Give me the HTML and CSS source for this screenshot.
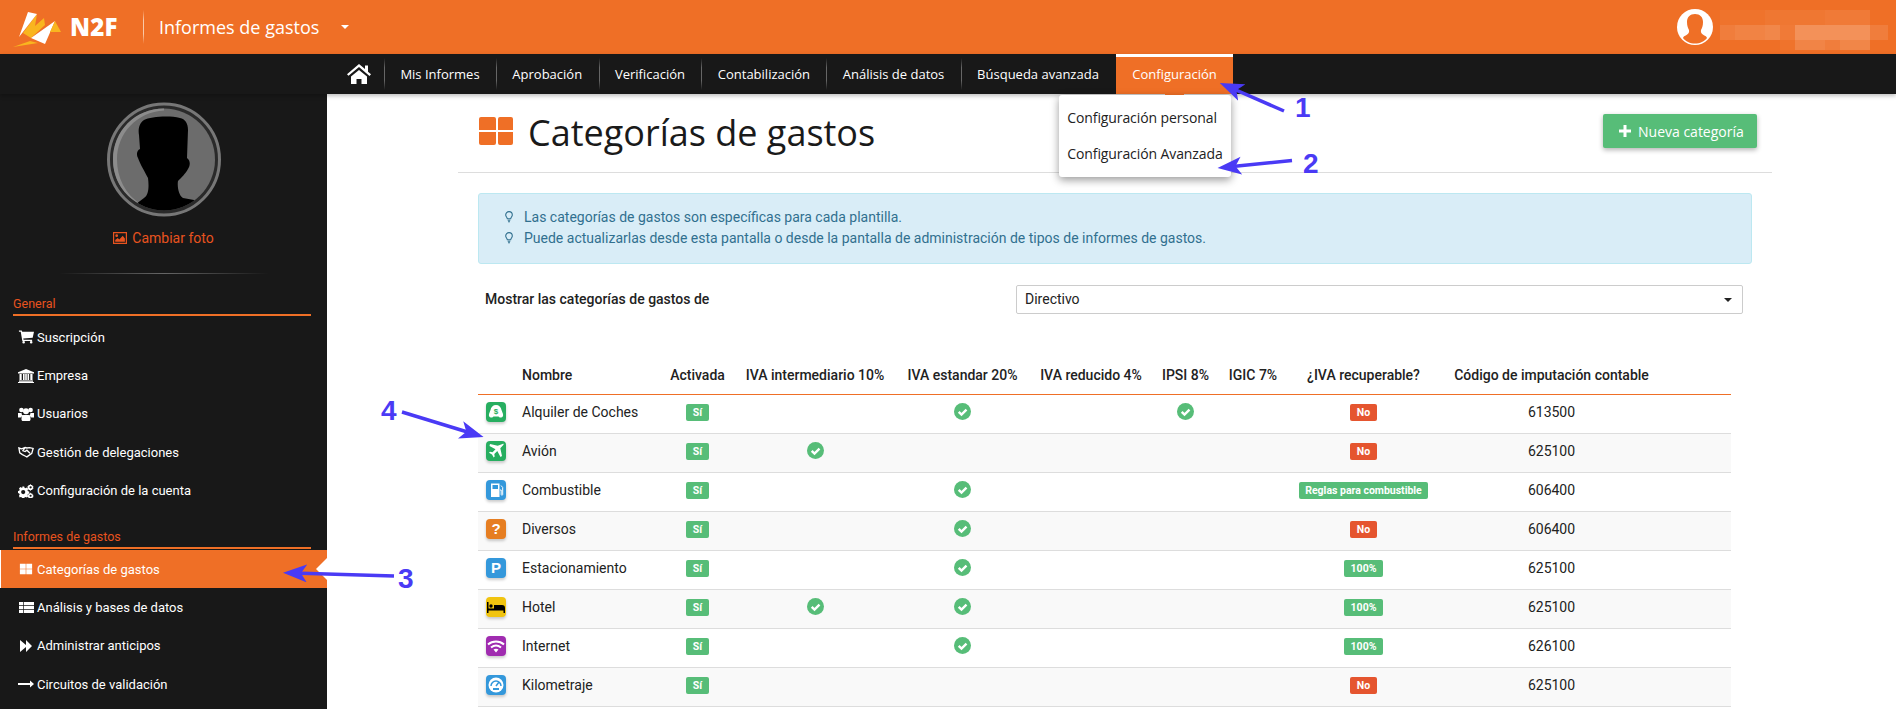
FILE: index.html
```html
<!DOCTYPE html>
<html lang="es">
<head>
<meta charset="utf-8">
<title>Categorías de gastos</title>
<link rel="stylesheet" href="styles.css">
</head>
<body>
<svg class="sprite" width="0" height="0">
  <symbol id="i-cart" viewBox="-1 0 17 14"><path d="M0 0h3l.5 1.500H16l-1.400 6.200-10 1 .3 1.300H14v1.300H3.600L1.900 1.300H0zM5 11.200a1.400 1.400 0 1 1 0 2.800 1.400 1.400 0 0 1 0-2.800zm8 0a1.400 1.400 0 1 1 0 2.800 1.400 1.400 0 0 1 0-2.800z"/></symbol>
  <symbol id="i-bank" viewBox="0 0 16 14"><path d="M8 0l8 3.200V4.400H0V3.200zM1.500 5h2.200v6H1.500zM5 5h1.600v6H5zm2.200 0h1.600v6H7.200zM9.500 5h1.600v6H9.500zm2.800 0h2.200v6h-2.200zM1 11.600h14V12.700H1zM0 13h16v1H0z"/></symbol>
  <symbol id="i-users" viewBox="0 0 16 14"><circle cx="3.400" cy="3" r="2.300"/><circle cx="12.600" cy="3" r="2.300"/><circle cx="8" cy="4.200" r="3"/><path d="M0 6h3.500a4 4 0 0 0 1.200 2.800C3.500 9.300 3 10 2.800 10.500H0zM16 6h-3.500a4 4 0 0 1-1.200 2.800c1.200.5 1.700 1.200 1.900 1.700H16zM5.500 8h5c1.500 0 2 1.500 2 3v1.500c0 .8-.6 1.500-1.500 1.500H5c-.9 0-1.500-.7-1.500-1.500V11c0-1.500.5-3 2-3z"/></symbol>
  <symbol id="i-hands" viewBox="0 0 18 12"><path fill="none" stroke="#fff" stroke-width="1.500" d="M1 1.500l3 1 4-1.500 2 .5 3-.5 4 1-1.500 5.500-5.500 4-2-1-3-1.500-3-2zM8 1L5.500 4.500 8 5.500l2-1.500 3.500 3.500"/></symbol>
  <symbol id="i-cogs" viewBox="0 0 16 14"><path fill-rule="evenodd" d="M4.200 2.500h2l.3 1.300 1.100.5 1.200-.7 1.400 1.400-.7 1.200.5 1.100 1.300.3v2l-1.300.3-.5 1.100.7 1.200-1.400 1.400-1.200-.7-1.100.5-.3.600h-2l-.3-.6-1.100-.5-1.200.7L1 11.700l.7-1.200-.5-1.100L0 9.100v-2l1.200-.3.500-1.100L1 4.500l1.400-1.400 1.200.7 1.100-.5zM5.200 6a2.100 2.100 0 1 0 0 4.200 2.100 2.100 0 0 0 0-4.200z"/><path fill-rule="evenodd" d="M12.500 0l.6 1 1.100-.1.300 1.100 1 .5-.4 1 .4 1-1 .5-.3 1.100-1.100-.1-.6.9-.8-.8-1.100.1-.3-1.100-1-.5.400-1-.4-1 1-.5.300-1.100 1.100.1zm.1 2.200a1.100 1.100 0 1 0 0 2.300 1.100 1.100 0 0 0 0-2.300zM12.500 8.500l.6 1h1.100l.3 1 1 .6-.4 1 .4.900-1 .5-.3 1h-3.400l-.3-1-1-.5.400-.9-.4-1 1-.6.300-1h1.100zm.1 2.200a1 1 0 1 0 0 2.100 1 1 0 0 0 0-2.100z"/></symbol>
  <symbol id="i-grid" viewBox="-2 -1.500 17 14"><path d="M0 0h6.200v5.200H0zM6.800 0H13v5.200H6.800zM0 5.800h6.200V11H0zM6.800 5.800H13V11H6.800z"/></symbol>
  <symbol id="i-list" viewBox="-1 -1 16 14"><path d="M0 0h4v3.200H0zM4.700 0H15v3.200H4.700zM0 3.900h4v3.200H0zM4.700 3.900H15v3.200H4.700zM0 7.800h4V11H0zM4.700 7.800H15V11H4.700z"/></symbol>
  <symbol id="i-ff" viewBox="-2 -1 16 14"><path d="M0 0l6 5V0l6 6-6 6V7l-6 5z"/></symbol>
  <symbol id="i-long" viewBox="0 0 14 6"><path d="M0 2.200h10.500V0L14 3l-3.500 3V3.800H0z"/></symbol>
  <symbol id="i-bulb" viewBox="0 0 8 12"><path fill="none" stroke="#31708f" stroke-width="1.100" d="M4 .6a3.300 3.300 0 0 1 3.300 3.300c0 1.500-1.300 2.300-1.600 3.800H2.300C2 6.200.7 5.400.7 3.900A3.300 3.300 0 0 1 4 .6zM2.700 9.200h2.600M3 10.800h2"/></symbol>
  <symbol id="i-check" viewBox="0 0 17 17"><circle cx="8.500" cy="8.500" r="8.500" fill="#57bd78"/><path d="M4.700 8.800l2.800 2.800 5-5" fill="none" stroke="#fff" stroke-width="2.400"/></symbol>
</svg>

<header class="topbar">
  <svg class="logo" viewBox="0 0 68 44" width="68" height="44">
    <path fill="#f9b51f" d="M13 42l25-4-8-2z"/>
    <path fill="#f9b51f" d="M37 9l-2 12 9-8 1 7-14 13-8-5z"/>
    <path fill="#fff" d="M28 7l9 2-18 23z"/>
    <path fill="#fff" d="M55 16L45 39 31 33z"/>
    <path fill="#f9b51f" d="M55 16l6 11H50z"/>
  </svg>
  <span class="brand">N2<span class="brand-f">F</span></span>
  <span class="topbar-sep"></span>
  <span class="app-title">Informes de gastos</span>
  <span class="caret"></span>
  <div class="user">
    <svg class="user-pic" viewBox="0 0 36 36" width="36" height="36">
      <circle cx="18" cy="18" r="18" fill="#fff"/>
      <path fill="#ef6f26" d="M18 5c5 0 8 3 8 8 0 4-1 6-2 8-.5 2 .5 4 2.500 5 2 1 3 1.500 3.500 3-2.500 3.500-7 5.500-12 5.500S8.500 32.500 6 29c.5-1.500 1.500-2 3.500-3s3-3 2.500-5c-1-2-2-4-2-8 0-5 3-8 8-8z"/>
    </svg>
    <svg class="mosaic" viewBox="0 0 168 40" width="168" height="40">
      <g fill="#fff">
        <rect x="0" y="0" width="45" height="15" opacity=".03"/><rect x="45" y="0" width="60" height="15" opacity=".06"/><rect x="105" y="0" width="45" height="15" opacity=".08"/>
        <rect x="0" y="15" width="15" height="15" opacity=".1"/><rect x="15" y="15" width="30" height="15" opacity=".14"/><rect x="45" y="15" width="15" height="15" opacity=".17"/><rect x="60" y="15" width="15" height="15" opacity=".08"/><rect x="75" y="15" width="75" height="15" opacity=".24"/><rect x="150" y="15" width="18" height="15" opacity=".1"/>
        <rect x="60" y="30" width="15" height="10" opacity=".03"/><rect x="75" y="30" width="30" height="10" opacity=".15"/><rect x="105" y="30" width="15" height="10" opacity=".1"/><rect x="120" y="30" width="30" height="10" opacity=".16"/>
      </g>
    </svg>
  </div>
</header>

<nav class="navbar">
  <a class="nav-home"><svg viewBox="0 0 24 20" width="24" height="20"><path fill="#fff" d="M12 0l6 5V1.500h3v6.200l3 2.500-1.500 1.800L12 3 1.500 11.800 0 10.200zM4 12.500L12 6l8 6.500V20h-5.500v-5h-5v5H4z"/></svg></a>
  <a class="nav-item">Mis Informes</a>
  <a class="nav-item">Aprobación</a>
  <a class="nav-item">Verificación</a>
  <a class="nav-item">Contabilización</a>
  <a class="nav-item">Análisis de datos</a>
  <a class="nav-item">Búsqueda avanzada</a>
  <div class="nav-active">
    <a class="nav-active-link">Configuración</a>
    <div class="dropdown">
      <a class="dropdown-item">Configuración personal</a>
      <a class="dropdown-item">Configuración Avanzada</a>
    </div>
  </div>
</nav>

<div class="layout">
  <aside class="sidebar">
    <div class="profile">
      <svg class="profile-pic" viewBox="0 0 114 115" width="114" height="115">
        <defs><clipPath id="pc"><circle cx="57" cy="57.500" r="51"/></clipPath></defs>
        <circle cx="57" cy="57.500" r="55.500" fill="#2a2a2a" stroke="#777" stroke-width="3"/>
        <circle cx="57" cy="57.500" r="51" fill="#6c6c6c"/>
        <path fill="#8c8c8c" d="M57 6.500C28 6.500 6 29 6 57.500c0 20 11 37 28 45C18 92 10 76 10 57.500 10 31 30 10 57 8.500z"/>
        <path clip-path="url(#pc)" fill="#000" d="M37 18c6-3 24-5 36-2 5 1 8 5 8 12l-1 28c4 3 3 8 1 11-2 4-7 9-10 12-1 6 1 15 5 17l11 2 6 30H15l14-26 8-6c5-3 5-12 4-20-3-6-8-14-10-20-2-3-1-8 2-9l-1-14c-1-5 0-12 5-15z"/>
      </svg>
      <a class="photo-link"><svg viewBox="0 0 14 12" width="14" height="12"><path fill-rule="evenodd" fill="#e8531f" d="M0 0h14v12H0zm1.200 1.200v9.600h11.600V1.200zM3.700 2.300a1.400 1.400 0 1 1 0 2.800 1.400 1.400 0 0 1 0-2.800zM2.200 9.800V8l2.500-2 1.600 1.400 3.400-3.600 2.200 2.600v3.400z"/></svg>Cambiar foto</a>
      <div class="fade-rule"></div>
    </div>
    <div class="side-title">General</div>
    <a class="side-item"><svg class="side-icon"><use href="#i-cart"/></svg>Suscripción</a>
    <a class="side-item"><svg class="side-icon"><use href="#i-bank"/></svg>Empresa</a>
    <a class="side-item"><svg class="side-icon"><use href="#i-users"/></svg>Usuarios</a>
    <a class="side-item"><svg class="side-icon"><use href="#i-hands"/></svg>Gestión de delegaciones</a>
    <a class="side-item"><svg class="side-icon"><use href="#i-cogs"/></svg>Configuración de la cuenta</a>
    <div class="side-title side-title-second">Informes de gastos</div>
    <a class="side-item side-item-active"><svg class="side-icon"><use href="#i-grid"/></svg>Categorías de gastos</a>
    <a class="side-item"><svg class="side-icon"><use href="#i-list"/></svg>Análisis y bases de datos</a>
    <a class="side-item"><svg class="side-icon"><use href="#i-ff"/></svg>Administrar anticipos</a>
    <a class="side-item"><svg class="side-icon"><use href="#i-long"/></svg>Circuitos de validación</a>
  </aside>

  <main class="content">
    <div class="page-head">
      <svg class="page-icon" viewBox="0 0 34 28" width="34" height="28"><path fill="#ef6f26" d="M2 0h13a2 2 0 0 1 2 2v11H0V2a2 2 0 0 1 2-2zM21 0h11a2 2 0 0 1 2 2v11H19V2a2 2 0 0 1 2-2zM0 15h17v11a2 2 0 0 1-2 2H2a2 2 0 0 1-2-2zM19 15h15v11a2 2 0 0 1-2 2H21a2 2 0 0 1-2-2z"/></svg>
      <h1 class="page-title">Categorías de gastos</h1>
      <a class="btn-new"><svg viewBox="0 0 12 12" width="12" height="12"><path fill="#fff" d="M4.500 0h3v4.500H12v3H7.500V12h-3V7.500H0v-3h4.500z"/></svg>Nueva categoría</a>
    </div>

    <div class="alert">
      <div class="alert-line"><svg class="bulb"><use href="#i-bulb"/></svg>Las categorías de gastos son específicas para cada plantilla.</div>
      <div class="alert-line"><svg class="bulb"><use href="#i-bulb"/></svg>Puede actualizarlas desde esta pantalla o desde la pantalla de administración de tipos de informes de gastos.</div>
    </div>

    <div class="filter">
      <label class="filter-label">Mostrar las categorías de gastos de</label>
      <div class="select">Directivo<span class="select-caret"></span></div>
    </div>

    <table class="grid">
      <colgroup>
        <col class="c-icon"><col class="c-name"><col class="c-on"><col class="c-i10"><col class="c-i20"><col class="c-i4"><col class="c-ipsi"><col class="c-igic"><col class="c-rec"><col class="c-code"><col class="c-rest">
      </colgroup>
      <thead>
        <tr><th></th><th class="left">Nombre</th><th>Activada</th><th>IVA intermediario 10%</th><th>IVA estandar 20%</th><th>IVA reducido 4%</th><th>IPSI 8%</th><th>IGIC 7%</th><th>¿IVA recuperable?</th><th>Código de imputación contable</th><th></th></tr>
      </thead>
      <tbody>
        <tr>
          <td><span class="cat cat-green"><svg viewBox="0 0 20 20" width="20" height="20"><path fill="#fff" d="M10 3c3 0 5 2 5.500 5l1.500 4c.5 2-.5 3.500-2 3.500h-1c-1 0-1.300-1-1.300-1H7.300s-.3 1-1.300 1H5c-1.500 0-2.500-1.500-2-3.500L4.500 8C5 5 7 3 10 3z"/><text x="10" y="11.500" class="cat-dollar">$</text></svg></span></td>
          <td class="left">Alquiler de Coches</td><td><span class="badge ok">Sí</span></td><td></td><td><svg class="check"><use href="#i-check"/></svg></td><td></td><td><svg class="check"><use href="#i-check"/></svg></td><td></td><td><span class="badge no">No</span></td><td>613500</td><td></td>
        </tr>
        <tr>
          <td><span class="cat cat-green"><svg viewBox="0 0 20 20" width="20" height="20"><path fill="#fff" d="M16.500 3c1-.7 1.500 0 .8 1l-3 3.300L16 15l-1.500 1-3.200-6-3 3 .4 2.500-1 1-1.700-3-3-1.700 1-1 2.500.4 3-3-6-3.200L4 3l7.700 1.700z"/></svg></span></td>
          <td class="left">Avión</td><td><span class="badge ok">Sí</span></td><td><svg class="check"><use href="#i-check"/></svg></td><td></td><td></td><td></td><td></td><td><span class="badge no">No</span></td><td>625100</td><td></td>
        </tr>
        <tr>
          <td><span class="cat cat-blue"><svg viewBox="0 0 20 20" width="20" height="20"><path fill="#fff" fill-rule="evenodd" d="M5 3.500h8.500V17H5zM6.500 5v4H12V5z"/><path fill="none" stroke="#fff" stroke-width="1" d="M14 10h1.200v4.500c0 1 1.500 1 1.500 0V7.500L15 5.500"/></svg></span></td>
          <td class="left">Combustible</td><td><span class="badge ok">Sí</span></td><td></td><td><svg class="check"><use href="#i-check"/></svg></td><td></td><td></td><td></td><td><span class="badge ok">Reglas para combustible</span></td><td>606400</td><td></td>
        </tr>
        <tr>
          <td><span class="cat cat-orange"><span class="cat-letter">?</span></span></td>
          <td class="left">Diversos</td><td><span class="badge ok">Sí</span></td><td></td><td><svg class="check"><use href="#i-check"/></svg></td><td></td><td></td><td></td><td><span class="badge no">No</span></td><td>606400</td><td></td>
        </tr>
        <tr>
          <td><span class="cat cat-blue"><span class="cat-letter">P</span></span></td>
          <td class="left">Estacionamiento</td><td><span class="badge ok">Sí</span></td><td></td><td><svg class="check"><use href="#i-check"/></svg></td><td></td><td></td><td></td><td><span class="badge ok">100%</span></td><td>625100</td><td></td>
        </tr>
        <tr>
          <td><span class="cat cat-yellow"><svg viewBox="0 0 20 20" width="20" height="20"><path fill="#000" d="M1 5h1.500v6.500H8V8h8a3 3 0 0 1 3 3v5h-1.500v-2.500h-15V16H1z"/><circle cx="5" cy="9" r="1.700" fill="#000"/></svg></span></td>
          <td class="left">Hotel</td><td><span class="badge ok">Sí</span></td><td><svg class="check"><use href="#i-check"/></svg></td><td><svg class="check"><use href="#i-check"/></svg></td><td></td><td></td><td></td><td><span class="badge ok">100%</span></td><td>625100</td><td></td>
        </tr>
        <tr>
          <td><span class="cat cat-purple"><svg viewBox="0 0 20 20" width="20" height="20"><path fill="none" stroke="#fff" stroke-width="2" d="M2 8.500c4.500-4 11.500-4 16 0M5 11.500c3-2.500 7-2.500 10 0"/><path fill="#fff" d="M7.500 13.500c1.500-1 3.500-1 5 0L10 16.500z"/></svg></span></td>
          <td class="left">Internet</td><td><span class="badge ok">Sí</span></td><td></td><td><svg class="check"><use href="#i-check"/></svg></td><td></td><td></td><td></td><td><span class="badge ok">100%</span></td><td>626100</td><td></td>
        </tr>
        <tr>
          <td><span class="cat cat-blue"><svg viewBox="0 0 20 20" width="20" height="20"><circle cx="10" cy="10" r="7.500" fill="#fff"/><path fill="none" stroke="#3498db" stroke-width="1.500" d="M5 11a5 5 0 0 1 10 0M10 11l3-4"/><path fill="#3498db" d="M7 13h6v2H7z"/></svg></span></td>
          <td class="left">Kilometraje</td><td><span class="badge ok">Sí</span></td><td></td><td></td><td></td><td></td><td></td><td><span class="badge no">No</span></td><td>625100</td><td></td>
        </tr>
      </tbody>
    </table>
  </main>
</div>

<svg class="notes" viewBox="0 0 1896 709" width="1896" height="709">
  <defs>
    <marker id="head" markerUnits="userSpaceOnUse" markerWidth="26" markerHeight="20" refX="14" refY="9" orient="auto"><path d="M0 0L24 9 0 18 6 9z" fill="#4a3af5"/></marker>
  </defs>
  <g class="note-lines">
    <line x1="1284" y1="111" x2="1229" y2="87" marker-end="url(#head)"/>
    <line x1="1292" y1="160.600" x2="1227.500" y2="167" marker-end="url(#head)"/>
    <line x1="394" y1="576" x2="293" y2="573" marker-end="url(#head)"/>
    <line x1="402" y1="412" x2="474" y2="434" marker-end="url(#head)"/>
  </g>
  <text class="note-num" x="1295" y="117">1</text>
  <text class="note-num" x="1303" y="173">2</text>
  <text class="note-num" x="398" y="588">3</text>
  <text class="note-num" x="381" y="420">4</text>
</svg>
</body>
</html>
```
FILE: styles.css
```css
* { box-sizing: border-box; }
html, body { margin: 0; height: 709px; overflow: hidden; background: #fff; }
body { position: relative; font-family: "Roboto", "Liberation Sans", sans-serif; font-size: 14px; color: #222; }
.sprite { position: absolute; }

.topbar { height: 54px; background: #ef6f26; display: flex; align-items: center; color: #fff; font-family: "Open Sans", sans-serif; }
.logo { flex: none; margin-left: 0; }
.brand { margin-left: 2px; width: 52px; font-weight: 800; font-size: 24px; letter-spacing: .2px; line-height: 1; }
.brand-f { color: #fff; }
.topbar-sep { width: 1px; height: 34px; margin-left: 21px; background: linear-gradient(transparent, #f9c9a8 30%, #f9c9a8 70%, transparent); }
.app-title { margin-left: 15px; font-size: 18px; line-height: 1; width: 160px; white-space: nowrap; }
.caret { margin-left: 22px; width: 0; height: 0; border: 4px solid transparent; border-top-color: #fff; border-bottom: 0; }
.user { margin-left: auto; margin-right: 8px; display: flex; align-items: flex-start; height: 54px; padding-top: 9px; }
.user-pic { flex: none; }
.mosaic { flex: none; margin-left: 7px; margin-top: 1px; }

.navbar { height: 40px; background: #181818; display: flex; align-items: stretch; padding-left: 347px; color: #fff; font-family: "Open Sans", sans-serif; font-size: 13px; position: relative; z-index: 5; box-shadow: 0 2px 4px rgba(0,0,0,.25); }
.nav-home { width: 37px; display: flex; align-items: center; }
.nav-item { display: flex; align-items: center; padding: 0 16.400px; white-space: nowrap; position: relative; }
.nav-item::before { content: ""; position: absolute; left: 0; top: 4px; bottom: 4px; width: 1px; background: linear-gradient(transparent, #666 30%, #666 70%, transparent); }
.nav-active { position: relative; background: #ef6f26; border-top: 3px solid #fff; margin-left: 1px; }
.nav-active::after { content: ""; position: absolute; left: 49px; bottom: -2px; width: 19px; height: 2px; background: #ef6f26; }
.nav-active-link { display: flex; height: 100%; align-items: center; padding: 0 16px 3px; white-space: nowrap; }
.dropdown { position: absolute; left: -57px; top: 38px; width: 172px; height: 82px; padding-top: 4px; background: #fff; color: #222; border-radius: 3px; box-shadow: 0 3px 8px rgba(0,0,0,.4); z-index: 6; font-size: 14px; letter-spacing: -.1px; }
.dropdown-item { display: flex; align-items: center; height: 36px; padding-left: 8px; white-space: nowrap; }

.layout { display: flex; height: 615px; overflow: hidden; }
.sidebar { flex: none; width: 327px; background: #181818; color: #fff; }
.profile { display: flex; flex-direction: column; align-items: center; padding-top: 8px; height: 195px; }
.photo-link { margin-top: 11px; display: flex; align-items: center; gap: 5px; color: #e8531f; line-height: 20px; }
.fade-rule { margin-top: 25px; width: 210px; height: 1px; background: linear-gradient(90deg, transparent, #666 50%, transparent); }
.side-title { margin: 7px 16px 2px 13px; height: 20px; padding-bottom: 3px; line-height: 16px; font-size: 12.500px; color: #e8531f; border-bottom: 2px solid #ef6f26; }
.side-title-second { margin-top: 19px; margin-bottom: 1px; }
.side-item { display: flex; align-items: center; height: 38.400px; padding-left: 18px; font-size: 13px; position: relative; white-space: nowrap; }
.side-icon { width: 16px; height: 14px; margin-right: 3px; fill: #fff; flex: none; }
.side-item-active { background: #ef6f26; border-left: 1px solid #fff; padding-left: 17px; }
.side-item-active::after { content: ""; position: absolute; right: 0; top: 8px; border: 11px solid transparent; border-left: 0; border-right-color: #fff; }

.content { flex: 1; min-width: 0; }
.page-head { margin-left: 131px; width: 1314px; height: 79px; padding: 20px 15px 0 21px; border-bottom: 1px solid #ddd; display: flex; align-items: flex-start; }
.page-icon { flex: none; margin-top: 3px; }
.page-title { margin: -3px 0 0 15px; font-family: "Open Sans", sans-serif; font-weight: 400; font-size: 36px; line-height: 44px; color: #1a1a1a; }
.btn-new { margin-left: auto; width: 154px; height: 34px; background: #57bd78; color: #fff; border-radius: 2px; box-shadow: 0 2px 5px rgba(0,0,0,.3); display: flex; align-items: center; gap: 7px; padding-left: 16px; font-family: "Open Sans", sans-serif; font-size: 14px; white-space: nowrap; }
.alert { margin: 20px 0 0 151px; width: 1274px; height: 71px; padding: 13px 0 0 26px; background: #d9edf7; border: 1px solid #bce8f1; border-radius: 3px; color: #31708f; }
.alert-line { display: flex; align-items: center; height: 20.500px; white-space: nowrap; }
.bulb { width: 8px; height: 12px; margin-right: 11px; flex: none; }
.filter { margin: 21px 0 0 158px; width: 1258px; display: flex; align-items: center; height: 29px; }
.filter-label { width: 531px; font-weight: 500; color: #222; white-space: nowrap; margin-top: -1px; }
.select { flex: 1; height: 29px; border: 1px solid #ccc; border-radius: 2px; padding-left: 8px; line-height: 27px; font-size: 14px; position: relative; }
.select-caret { position: absolute; right: 10px; top: 12px; border: 4px solid transparent; border-top-color: #222; border-bottom: 0; }

.grid { margin: 42px 0 0 151px; width: 1253px; table-layout: fixed; border-collapse: collapse; }
.c-icon { width: 35px; } .c-name { width: 147px; } .c-on { width: 75px; } .c-i10 { width: 160px; } .c-i20 { width: 135px; } .c-i4 { width: 122px; } .c-ipsi { width: 67px; } .c-igic { width: 68px; } .c-rec { width: 153px; } .c-code { width: 223px; } .c-rest { width: 68px; }
.grid th { height: 38px; padding: 0; font-weight: 500; font-size: 14px; color: #222; text-align: center; border-bottom: 1px solid #ef6f26; white-space: nowrap; }
.grid td { height: 39px; padding: 0 0 4px; text-align: center; border-bottom: 1px solid #ddd; font-size: 14px; vertical-align: middle; }
.grid tbody tr:nth-child(even) td { background: #f9f9f9; }
.grid .left { text-align: left; padding-left: 9px; }
.cat { display: inline-flex; align-items: center; justify-content: center; width: 20px; height: 20px; border-radius: 4px; box-shadow: 0 2px 3px rgba(0,0,0,.2); vertical-align: middle; margin-left: 1px; overflow: hidden; }
.cat svg { display: block; }
.cat-green { background: #27ae60; } .cat-blue { background: #3498db; } .cat-orange { background: #e67e22; } .cat-yellow { background: #f1c40f; } .cat-purple { background: #a02cb0; }
.cat-letter { color: #fff; font-family: "Liberation Sans", sans-serif; font-weight: 700; font-size: 15px; line-height: 1; }
.cat-dollar { fill: #27ae60; font-family: "Liberation Sans", sans-serif; font-weight: 700; font-size: 8px; text-anchor: middle; }
.badge { display: inline-block; height: 17px; padding: 0 6.500px; border-radius: 2px; color: #fff; font-size: 10.500px; font-weight: 700; line-height: 17px; vertical-align: middle; white-space: nowrap; position: relative; top: 1px; }
.ok { background: #57bd78; } .no { background: #e5552f; }
.check { width: 17px; height: 17px; vertical-align: middle; display: inline-block; }

.notes { position: absolute; left: 0; top: 0; z-index: 20; pointer-events: none; }
.note-lines line { stroke: #4a3af5; stroke-width: 3.500; }
.note-num { fill: #4a3af5; font-family: "Liberation Sans", sans-serif; font-weight: 700; font-size: 28px; }
```
